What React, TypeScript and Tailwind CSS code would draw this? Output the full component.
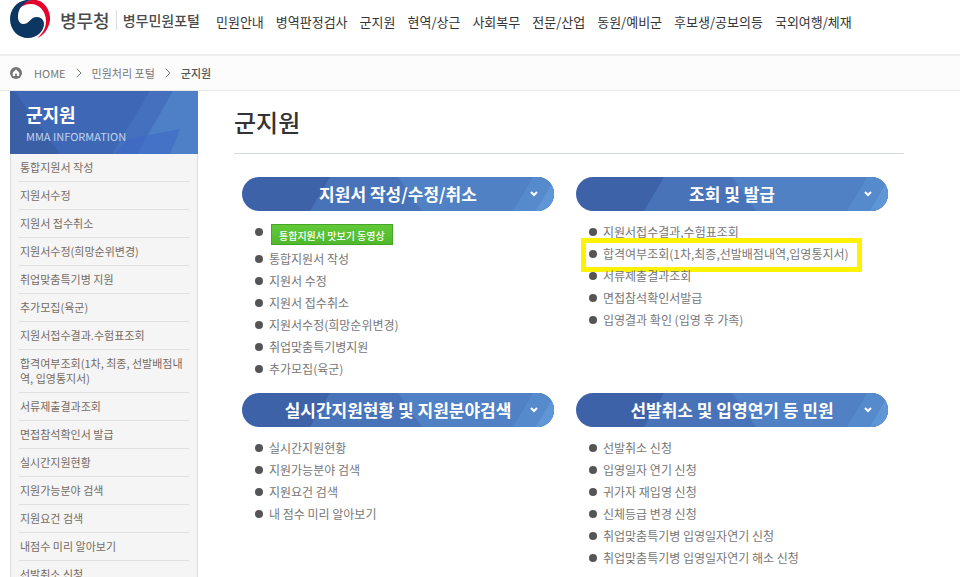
import { ChevronRight } from "lucide-react"

const navItems = [
  "민원안내",
  "병역판정검사",
  "군지원",
  "현역/상근",
  "사회복무",
  "전문/산업",
  "동원/예비군",
  "후보생/공보의등",
  "국외여행/체재",
]

const sideItems = [
  "통합지원서 작성",
  "지원서수정",
  "지원서 접수취소",
  "지원서수정(희망순위변경)",
  "취업맞춤특기병 지원",
  "추가모집(육군)",
  "지원서접수결과.수험표조회",
  "합격여부조회(1차, 최종, 선발배점내역, 입영통지서)",
  "서류제출결과조회",
  "면접참석확인서 발급",
  "실시간지원현황",
  "지원가능분야 검색",
  "지원요건 검색",
  "내점수 미리 알아보기",
  "선발취소 신청",
]

interface Section {
  title: string
  items: string[]
  video?: string
  highlight?: string
}

const sections: Section[] = [
  {
    title: "지원서 작성/수정/취소",
    video: "통합지원서 맛보기 동영상",
    items: [
      "통합지원서 작성",
      "지원서 수정",
      "지원서 접수취소",
      "지원서수정(희망순위변경)",
      "취업맞춤특기병지원",
      "추가모집(육군)",
    ],
  },
  {
    title: "조회 및 발급",
    highlight: "합격여부조회(1차,최종,선발배점내역,입영통지서)",
    items: [
      "지원서접수결과,수험표조회",
      "합격여부조회(1차,최종,선발배점내역,입영통지서)",
      "서류제출결과조회",
      "면접참석확인서발급",
      "입영결과 확인 (입영 후 가족)",
    ],
  },
  {
    title: "실시간지원현황 및 지원분야검색",
    items: ["실시간지원현황", "지원가능분야 검색", "지원요건 검색", "내 점수 미리 알아보기"],
  },
  {
    title: "선발취소 및 입영연기 등 민원",
    items: [
      "선발취소 신청",
      "입영일자 연기 신청",
      "귀가자 재입영 신청",
      "신체등급 변경 신청",
      "취업맞춤특기병 입영일자연기 신청",
      "취업맞춤특기병 입영일자연기 해소 신청",
    ],
  },
]

function Logo() {
  return (
    <svg viewBox="0 0 40 40" className="h-10 w-10 shrink-0" aria-hidden="true">
      <path
        d="M10 8C14 0 26-3 33 3c7 6 9 16 5 24-2 5-6 9-11 11 5-4 9-9 9-17C36 11 29 4 21 4c-5 0-9 2-11 4Z"
        fill="#e6002d"
      />
      <path
        d="M23 0C9-2 0 8 0 19c0 11 8 19 18 19 9 0 16-7 16-14 0-4-3-7-7-7-7 0-7 7-14 7-3 0-5-3-5-7C8 10 11 6 15 3c2-2 5-3 8-3Z"
        fill="#0b3762"
      />
    </svg>
  )
}

function Header() {
  return (
    <header className="flex h-14 items-start border-b-2 border-[#eeeeee] pl-[10px]">
      <a href="#" className="flex h-10 items-center text-[#4b4b4b]">
        <Logo />
        <span className="ml-[10px] text-[18px] font-medium">병무청</span>
        <span className="mx-[6px] h-5 w-px bg-[#dddddd]" />
        <span className="text-[14px] font-medium">병무민원포털</span>
      </a>
      <nav className="ml-4 flex h-11 items-center gap-3 text-[13px] text-[#333333]">
        {navItems.map((item) => (
          <a key={item} href="#" className="whitespace-nowrap">
            {item}
          </a>
        ))}
      </nav>
    </header>
  )
}

function Breadcrumb() {
  return (
    <nav className="flex h-[35px] items-center border-b border-[#e8e8e8] bg-[#fcfcfc] pl-[10px] text-[11px] leading-4 text-[#777777]">
      <svg viewBox="0 0 12 12" className="mr-3 h-3 w-3" aria-hidden="true">
        <circle cx="6" cy="6" r="6" fill="#777777" />
        <path d="M6 2.6 2.8 5.6v3.3h2.3V6.8h1.8v2.1h2.3V5.6Z" fill="#ffffff" />
      </svg>
      <a href="#">HOME</a>
      <ChevronRight className="mx-[5px] h-4 w-4" strokeWidth={1.5} />
      <a href="#">민원처리 포털</a>
      <ChevronRight className="mx-[5px] h-4 w-4" strokeWidth={1.5} />
      <a href="#" className="font-medium text-[#555555]">
        군지원
      </a>
    </nav>
  )
}

function Sidebar() {
  return (
    <aside className="w-[188px] shrink-0">
      <div className="relative h-[63px] overflow-hidden bg-[#3e68b5]">
        <svg viewBox="0 0 188 63" preserveAspectRatio="none" className="absolute inset-0 h-full w-full" aria-hidden="true">
          <path d="M0 0h4l46 63H0Z" fill="#3b5fa5" />
          <path d="M140 0h48v63h-86Z" fill="#4570be" />
          <path d="M163 0h25v63h-61Z" fill="#4e80c8" />
          <path d="m118 48 52-10-10 25h-55Z" fill="#3c69c4" opacity="0.6" />
        </svg>
        <div className="relative pl-4 pt-3 text-white">
          <h2 className="text-[18px] font-bold leading-[22px]">군지원</h2>
          <p className="mt-1 text-[11px] leading-[14px] text-[#c3d2ee]">MMA INFORMATION</p>
        </div>
      </div>
      <ul className="border-x border-[#dddddd] bg-[#f5f5f5] px-2 text-[11px] leading-[15px] text-[#756b62]">
        {sideItems.map((item) => (
          <li key={item} className="border-b border-[#dfdfdf]">
            <a href="#" className="block py-[6px] pl-px pr-1">
              {item}
            </a>
          </li>
        ))}
      </ul>
    </aside>
  )
}

function PillTitle({ title }: { title: string }) {
  return (
    <h2>
      <button type="button" className="relative block h-[34px] w-full overflow-hidden rounded-full bg-[#3d62a8] text-white">
        <svg viewBox="0 0 312 34" preserveAspectRatio="none" className="absolute inset-0 h-full w-full" aria-hidden="true">
          <path d="M88 0h224v34H68Z" fill="#4973b8" />
          <path d="M156 0h156v34H180Z" fill="#4f81c4" />
          <path d="M291 0h21v34h-41Z" fill="#558acd" />
          <path d="M312 3v31h-18Z" fill="#5f97d6" />
        </svg>
        <span className="relative block text-[17px] font-bold leading-[30px]">{title}</span>
        <svg viewBox="0 0 8 6" className="absolute right-4 top-[14px] h-[6px] w-2" aria-hidden="true">
          <path d="m1 1 3 3 3-3" fill="none" stroke="#ffffff" strokeWidth="2" />
        </svg>
      </button>
    </h2>
  )
}

function SectionCard({ section }: { section: Section }) {
  return (
    <section>
      <PillTitle title={section.title} />
      <ul className="pl-[13px] pt-[10px] text-[12px] leading-[22px] text-[#777777]">
        {section.video && (
          <li className="flex h-[27px] gap-2">
            <span className="mt-[7px] h-2 w-2 rounded-full bg-[#555555]" />
            <button
              type="button"
              className="mt-[3px] h-[21px] border border-[#46a428] bg-linear-to-b from-[#62ca38] to-[#50b92b] px-[7px] pt-[2px] text-[10px] font-medium leading-[18px] text-white"
            >
              {section.video}
            </button>
          </li>
        )}
        {section.items.map((item) => (
          <li key={item} className="relative flex items-center gap-[6px]">
            <span className="h-2 w-2 shrink-0 rounded-full bg-[#555555]" />
            <a href="#" className="whitespace-nowrap">
              {item}
            </a>
            {item === section.highlight && (
              <span className="pointer-events-none absolute -left-2 -top-[5px] h-[34px] w-[281px] border-[5px] border-[#fff200]" />
            )}
          </li>
        ))}
      </ul>
    </section>
  )
}

export default function App() {
  return (
    <div className="h-screen overflow-hidden bg-white font-['Noto_Sans_CJK_KR',sans-serif]">
      <Header />
      <Breadcrumb />
      <div className="flex pl-[10px]">
        <Sidebar />
        <main className="ml-9 mr-14 min-w-0 flex-1">
          <h1 className="h-[63px] border-b border-[#d5dadf] text-[24px] font-medium leading-[62px] text-[#333333]">
            군지원
          </h1>
          <div className="grid grid-cols-2 gap-x-[22px] gap-y-[13px] pl-2 pr-4 pt-[23px]">
            {sections.map((section) => (
              <SectionCard key={section.title} section={section} />
            ))}
          </div>
        </main>
      </div>
    </div>
  )
}
